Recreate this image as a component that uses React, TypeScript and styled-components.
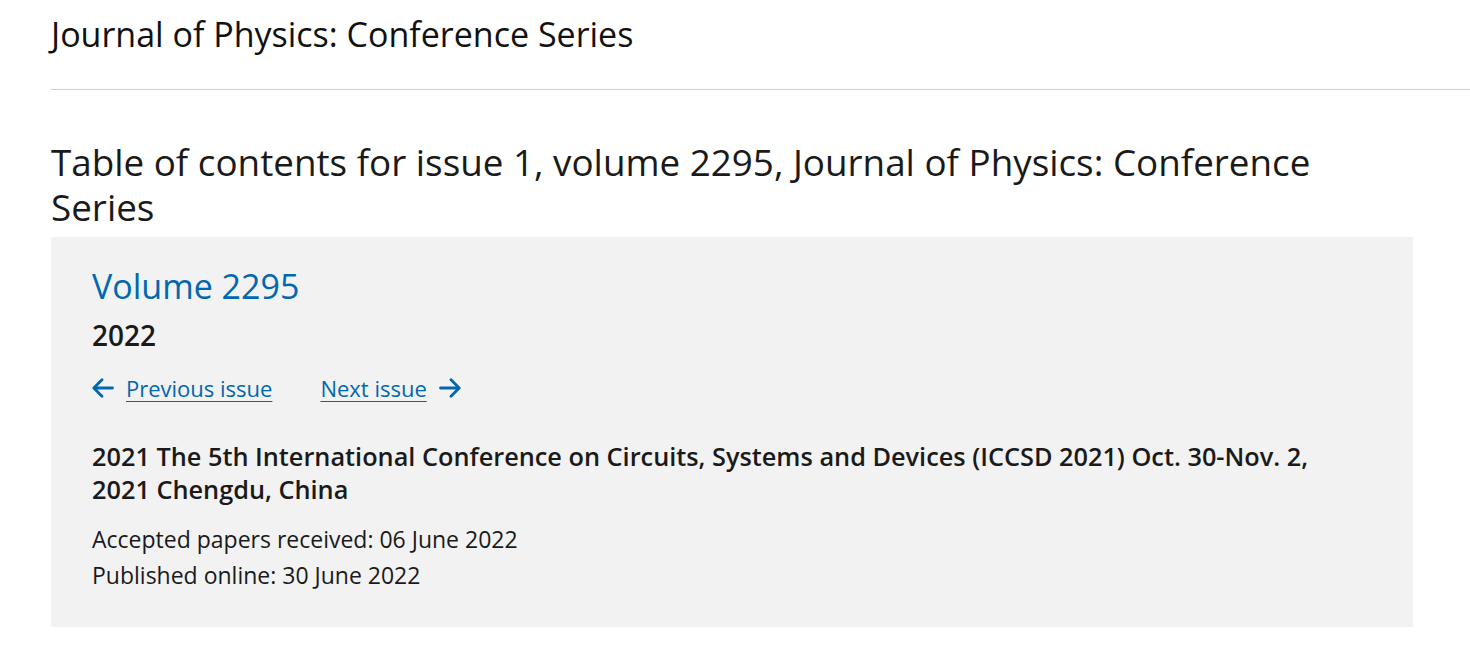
import React from "react";
import styled, { createGlobalStyle } from "styled-components";

const GlobalStyle = createGlobalStyle`
  html, body {
    margin: 0;
    padding: 0;
    background: #ffffff;
  }
  body {
    font-family: "Open Sans", "Noto Sans", sans-serif;
    color: #1a1a1a;
  }
`;

const Page = styled.div`
  padding: 0 0 40px 51px;
`;

const SiteHeader = styled.header`
  border-bottom: 1px solid #d0d0d0;
  padding: 14px 0 35px;
`;

const JournalTitle = styled.div`
  font-size: 34px;
  line-height: 40px;
  color: #111;
`;

const Main = styled.main`
  width: 1362px;
  padding-top: 50px;
`;

const PageTitle = styled.h1`
  margin: 0 0 7px;
  font-size: 36.8px;
  font-weight: 400;
  line-height: 45px;
  color: #1a1a1a;
`;

const IssueBox = styled.section`
  background: #f2f2f2;
  padding: 27px 40px 34px 41px;
`;

const VolumeTitle = styled.h2`
  margin: 0;
  font-size: 34px;
  font-weight: 400;
  line-height: 44px;
  color: #0067b1;
`;

const Year = styled.div`
  margin-top: 11px;
  font-size: 28px;
  font-weight: 600;
  line-height: 32px;
`;

const IssueNav = styled.nav`
  display: flex;
  align-items: center;
  gap: 48px;
  margin-top: 22px;
`;

const NavLink = styled.a`
  display: flex;
  align-items: center;
  gap: 12px;
  color: #0067b1;
  font-size: 22px;
  line-height: 30px;
  text-decoration: none;
  cursor: pointer;

  span {
    text-decoration: underline;
    text-underline-offset: 4px;
    text-decoration-thickness: 1px;
  }
`;

const ConferenceName = styled.h3`
  margin: 37px 0 0;
  max-width: 1250px;
  font-size: 25.3px;
  font-weight: 600;
  line-height: 33px;
`;

const Dates = styled.div`
  margin-top: 15px;
  font-size: 23px;
  line-height: 36px;
`;

const Arrow = ({ dir }: { dir: "left" | "right" }) => (
  <svg width="22" height="22" viewBox="0 0 22 22" fill="none">
    {dir === "left" ? (
      <path
        d="M20.5 11H3M10 2.8L1.8 11L10 19.2"
        stroke="#0067b1"
        strokeWidth="2.8"
        strokeLinecap="round"
        strokeLinejoin="round"
      />
    ) : (
      <path
        d="M1.5 11H19M12 2.8L20.2 11L12 19.2"
        stroke="#0067b1"
        strokeWidth="2.8"
        strokeLinecap="round"
        strokeLinejoin="round"
      />
    )}
  </svg>
);

export default function App() {
  return (
    <>
      <GlobalStyle />
      <Page>
        <SiteHeader>
          <JournalTitle>Journal of Physics: Conference Series</JournalTitle>
        </SiteHeader>
        <Main>
          <PageTitle>
            Table of contents for issue 1, volume 2295, Journal of Physics:
            Conference Series
          </PageTitle>
          <IssueBox>
            <VolumeTitle>Volume 2295</VolumeTitle>
            <Year>2022</Year>
            <IssueNav>
              <NavLink>
                <Arrow dir="left" />
                <span>Previous issue</span>
              </NavLink>
              <NavLink>
                <span>Next issue</span>
                <Arrow dir="right" />
              </NavLink>
            </IssueNav>
            <ConferenceName>
              2021 The 5th International Conference on Circuits, Systems and
              Devices (ICCSD 2021) Oct. 30-Nov. 2, 2021 Chengdu, China
            </ConferenceName>
            <Dates>
              <div>Accepted papers received: 06 June 2022</div>
              <div>Published online: 30 June 2022</div>
            </Dates>
          </IssueBox>
        </Main>
      </Page>
    </>
  );
}
